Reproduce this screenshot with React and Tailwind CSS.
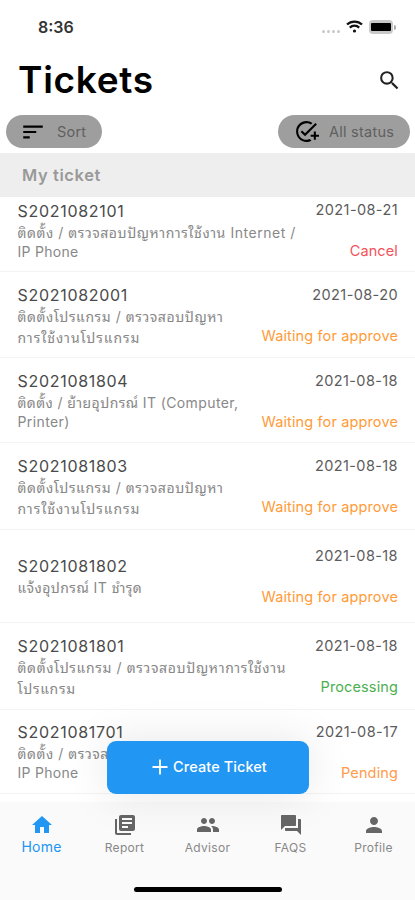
import {
  MdAddTask, MdForum, MdHome, MdLibraryBooks, MdPeople, MdPerson, MdSearch, MdSort,
} from 'react-icons/md';

const orange = 'text-[#ff9b38]';

const tickets = [
  { id: 'S2021082101', lines: [['ติดตั้ง / ตรวจสอบปัญหาการใช้งาน Internet /', 'tracking-[0.54px]'], ['IP Phone', 'tracking-[0.3px]']], date: '2021-08-21', status: 'Cancel', color: 'text-[#f4525a]', height: 'h-[75px]', pad: 'pt-[3px]', second: 'h-[18px]', datePad: 'pt-[2px]' },
  { id: 'S2021082001', lines: [['ติดตั้งโปรแกรม / ตรวจสอบปัญหา', 'tracking-[0.56px]'], ['การใช้งานโปรแกรม', 'tracking-[0.9px]']], date: '2021-08-20', status: 'Waiting for approve', color: orange, height: 'h-[86px]', pad: 'pt-[12px]', second: 'h-[22px]', datePad: 'pt-[12px]' },
  { id: 'S2021081804', lines: [['ติดตั้ง / ย้ายอุปกรณ์ IT (Computer,', 'tracking-[0.4px]'], ['Printer)', 'tracking-[0.4px]']], date: '2021-08-18', status: 'Waiting for approve', color: orange, height: 'h-[85px]', pad: 'pt-[12px]', second: 'h-[18px]', datePad: 'pt-[12px]' },
  { id: 'S2021081803', lines: [['ติดตั้งโปรแกรม / ตรวจสอบปัญหา', 'tracking-[0.56px]'], ['การใช้งานโปรแกรม', 'tracking-[0.9px]']], date: '2021-08-18', status: 'Waiting for approve', color: orange, height: 'h-[87px]', pad: 'pt-[12px]', second: 'h-[22px]', datePad: 'pt-[12px]' },
  { id: 'S2021081802', lines: [['แจ้งอุปกรณ์ IT ชำรุด', 'tracking-[0.45px]']], date: '2021-08-18', status: 'Waiting for approve', color: orange, height: 'h-[93px]', pad: 'pt-[25px]', second: 'h-[18px]', datePad: 'pt-[15px]' },
  { id: 'S2021081801', lines: [['ติดตั้งโปรแกรม / ตรวจสอบปัญหาการใช้งาน', 'tracking-[0.63px]'], ['โปรแกรม', 'tracking-[0.7px]']], date: '2021-08-18', status: 'Processing', color: 'text-[#4caf50]', height: 'h-[87px]', pad: 'pt-[12px]', second: 'h-[22px]', datePad: 'pt-[12px]' },
  { id: 'S2021081701', lines: [['ติดตั้ง / ตรวจสอบปัญหาการใช้งาน Internet /', 'tracking-[0.54px]'], ['IP Phone', 'tracking-[0.3px]']], date: '2021-08-17', status: 'Pending', color: 'text-[#ff9b4c]', height: 'h-[84px]', pad: 'pt-[11px]', second: 'h-[18px]', datePad: 'pt-[11px]' },
];

const tabs = [
  { label: 'Home', Icon: MdHome, active: true },
  { label: 'Report', Icon: MdLibraryBooks },
  { label: 'Advisor', Icon: MdPeople },
  { label: 'FAQS', Icon: MdForum },
  { label: 'Profile', Icon: MdPerson },
];

function StatusBar() {
  return (
    <div className="flex h-[54px] items-center justify-between pr-[19px] pl-[38px]">
      <span className="text-[16px] font-semibold text-[#333]">8:36</span>
      <div className="flex items-center gap-[6px]">
        <div className="mt-[9px] flex gap-[2px]">
          {[0, 1, 2, 3].map((i) => (
            <span key={i} className="size-[3px] rounded-full bg-[#c9c9c9]" />
          ))}
        </div>
        <svg className="-mt-[2px]" width="17" height="13" viewBox="0 0 17 13" fill="none" stroke="#111" strokeWidth="2.2">
          <path d="M1 4.6C5 .5 12 .5 16 4.6" />
          <path d="M3.8 7.6c2.6-2.6 6.8-2.6 9.4 0" />
          <circle cx="8.5" cy="11" r="1.6" fill="#111" stroke="none" />
        </svg>
        <div className="flex items-center gap-px">
          <div className="h-[14px] w-[24px] rounded-[4px] bg-[#c9c9c9] px-[2px] py-[3px]">
            <div className="h-[8px] w-[20px] rounded-[1px] bg-black" />
          </div>
          <div className="h-[5px] w-[2px] rounded-r bg-[#aaa]" />
        </div>
      </div>
    </div>
  );
}

function TicketRow({ ticket }) {
  const [first, second] = ticket.lines;
  return (
    <div className={`flex shrink-0 justify-between border-b border-[#f3f3f3] pr-[17px] pl-[17.5px] ${ticket.height}`}>
      <div className={`w-0 whitespace-nowrap ${ticket.pad}`}>
        <div className="h-[22px] text-[16px] leading-[22px] tracking-[0.7px] text-[#4a4a4a]">{ticket.id}</div>
        <div className={`flex h-[22px] items-center text-[14px] leading-[22px] text-[#888] ${first[1]}`}>{first[0]}</div>
        {second && (
          <div className={`-mt-[2px] flex items-center text-[14px] text-[#888] ${ticket.second} ${second[1]}`}>{second[0]}</div>
        )}
      </div>
      <div className={`flex flex-col items-end whitespace-nowrap ${ticket.datePad}`}>
        <div className="h-[21px] text-[14.5px] leading-[21px] tracking-[0.4px] text-[#5c5c5c]">{ticket.date}</div>
        <div className={`mt-[21px] h-[20px] text-[14.5px] leading-[20px] tracking-[0.13px] ${ticket.color}`}>{ticket.status}</div>
      </div>
    </div>
  );
}

export default function App() {
  return (
    <div className="flex h-[900px] w-[415px] flex-col overflow-hidden bg-white font-['Inter','Noto_Sans_Thai_Looped','Loma','Norasi',serif]">
      <StatusBar />
      <header className="flex h-[52px] items-center justify-between pr-[13px] pl-[18px]">
        <h1 className="text-[37px] font-semibold tracking-[0.7px] text-black">Tickets</h1>
        <MdSearch className="size-[25px] text-[#222]" />
      </header>
      <div className="flex h-[47px] items-start justify-between pt-[9px] pr-[5px] pl-[6px]">
        <button className="flex h-[33px] w-[96px] items-center rounded-full bg-[#9e9e9e] pl-[14px]">
          <MdSort className="size-[26px] text-black" />
          <span className="ml-[11px] text-[14.5px] tracking-[0.2px] text-[#606060]">Sort</span>
        </button>
        <button className="flex h-[33px] w-[132px] items-center rounded-full bg-[#9e9e9e] pl-[16px]">
          <MdAddTask className="size-[25px] text-black" />
          <span className="ml-[10px] text-[14.5px] tracking-[0.25px] whitespace-nowrap text-[#606060]">All status</span>
        </button>
      </div>
      <div className="flex h-[44px] shrink-0 items-center bg-[#eee] pt-px pl-[22px] text-[16.5px] font-semibold tracking-[0.6px] text-[#999]">
        My ticket
      </div>
      <main className="relative h-[605px] shrink-0">
        <div className="flex h-full flex-col overflow-hidden">
          {tickets.map((t) => <TicketRow key={t.id} ticket={t} />)}
        </div>
        <button className="absolute top-[544px] left-[107px] flex h-[53px] w-[202px] items-center justify-center rounded-[9px] bg-[#2196f3] pb-px pl-[3px] text-[14.5px] font-medium tracking-[0.08px] text-white shadow-[0_0_45px_rgba(0,0,0,0.1)]">
          <svg className="mr-[5px]" width="16" height="16" viewBox="0 0 16 16" stroke="currentColor" strokeWidth="1.8">
            <path d="M8 .5v15M.5 8h15" />
          </svg>
          Create Ticket
        </button>
      </main>
      <nav className="flex h-[98px] shrink-0 flex-col bg-[#fafafa]">
        <div className="grid grid-cols-5">
          {tabs.map(({ label, Icon, active }) => (
            <div key={label} className={`flex flex-col items-center pt-[11px] ${active ? 'text-[#2196f3]' : 'text-[#666]'}`}>
              <Icon className="size-[24px]" />
              <span className={active ? 'text-[14px] leading-[20px] tracking-[0.2px]' : 'text-[12px] leading-[22px] tracking-[0.3px] text-[#888]'}>{label}</span>
            </div>
          ))}
        </div>
        <div className="mt-auto mb-[8px] ml-[134px] h-[5px] w-[148px] rounded-full bg-black" />
      </nav>
    </div>
  );
}
